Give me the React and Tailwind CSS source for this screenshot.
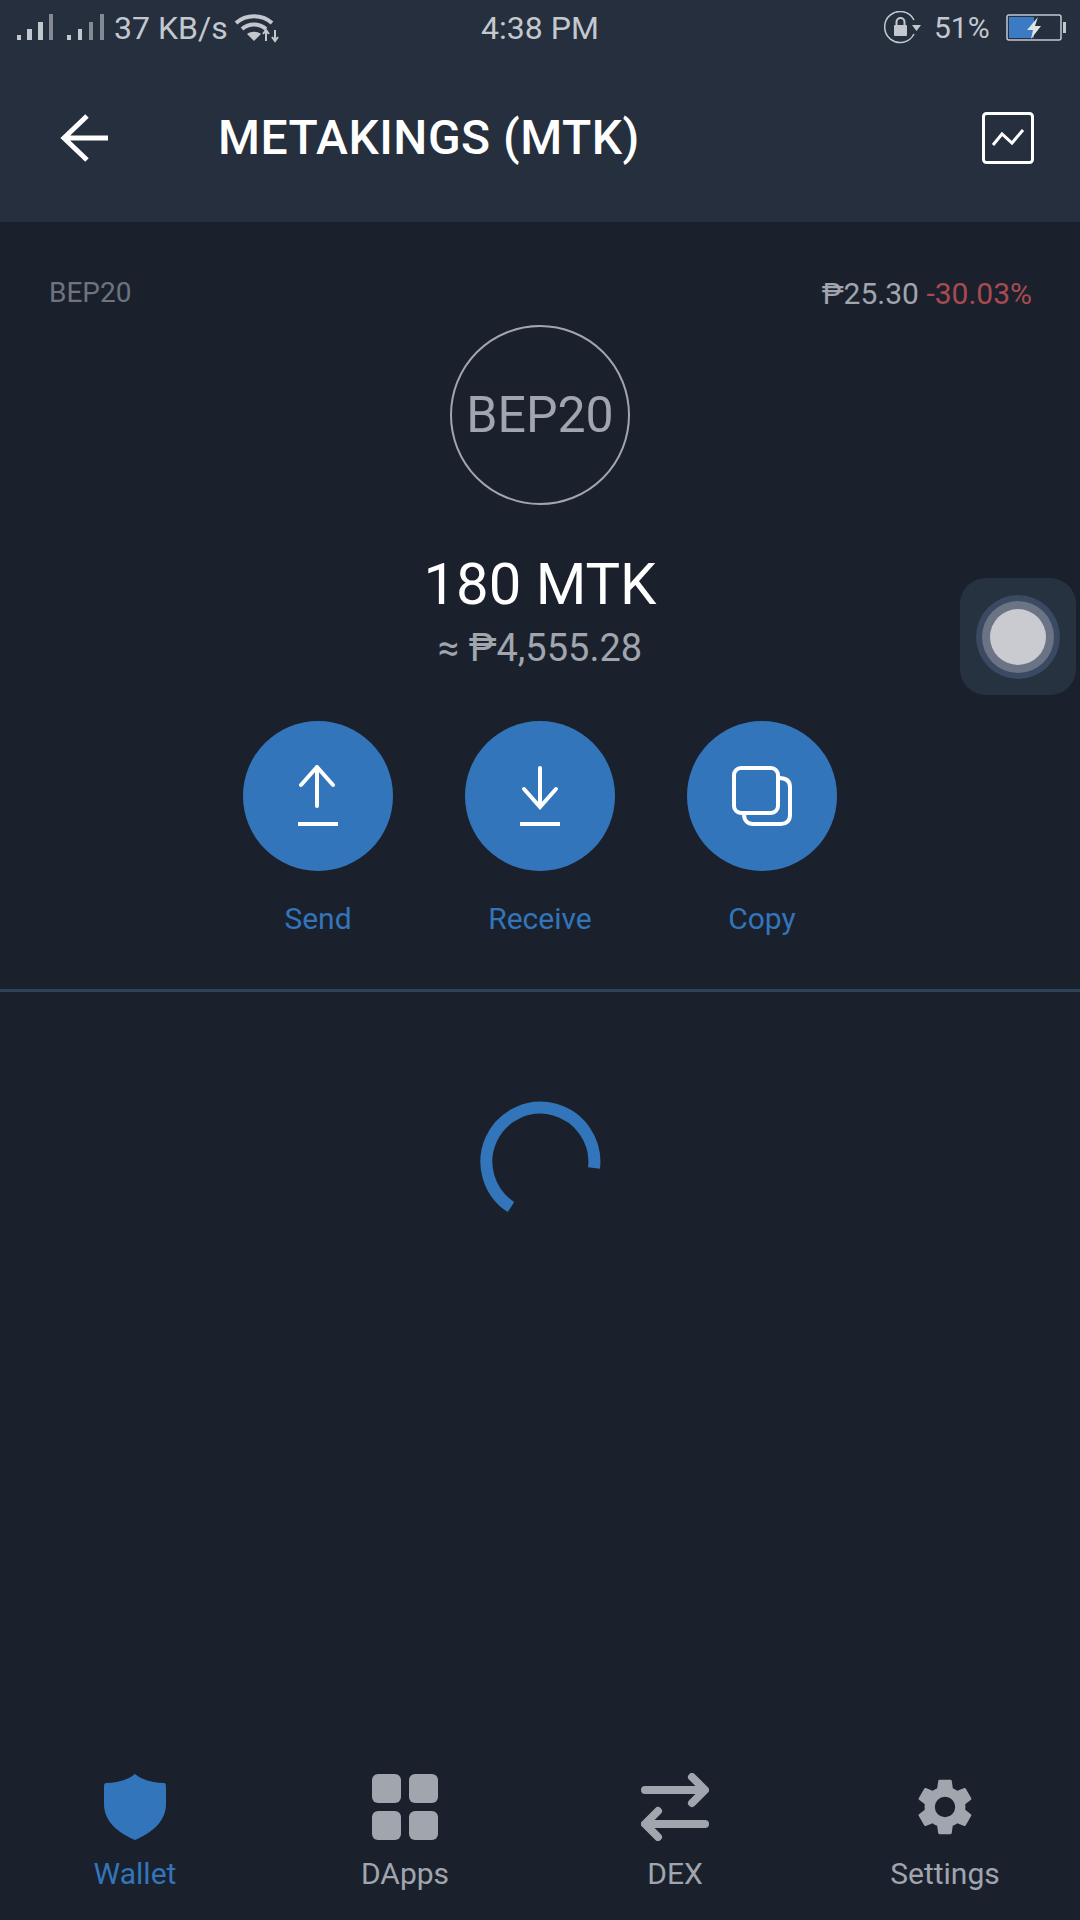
import React from "react";

const StatusBar = () => (
  <div className="flex items-center h-[56px] pl-[16px] pr-[14px] text-[#c3c8cf] text-[32px] leading-none relative">
    <svg width="90" height="30" viewBox="0 0 90 30" className="mr-[8px]">
      <g fill="#c3c8cf">
        <rect x="1" y="22" width="4" height="5" />
        <rect x="11" y="16" width="5" height="11" />
        <rect x="22" y="9" width="5" height="18" />
        <rect x="33" y="1" width="4" height="26" opacity="0.6" />
        <rect x="51" y="22" width="4" height="5" />
        <rect x="62" y="16" width="4" height="11" />
        <rect x="73" y="9" width="4" height="18" opacity="0.6" />
        <rect x="84" y="1" width="4" height="26" opacity="0.6" />
      </g>
    </svg>
    <span>37 KB/s</span>
    <svg width="46" height="30" viewBox="0 0 46 30" className="ml-[6px]" fill="none" stroke="#c3c8cf">
      <path d="M2 10 C12 1 28 1 38 10" strokeWidth="4" />
      <path d="M8 16 C15 10 25 10 32 16" strokeWidth="4" />
      <path d="M20 28 L13 21 C17 18 23 18 27 21 Z" fill="#c3c8cf" stroke="none" />
      <path d="M32 28 V18 M29 21 L32 17 L35 21 M41 17 V27 M38 24 L41 28 L44 24" strokeWidth="2" />
    </svg>
    <span className="absolute left-0 right-0 text-center pointer-events-none">4:38 PM</span>
    <div className="ml-auto flex items-center">
      <svg width="38" height="34" viewBox="0 0 38 34" fill="none" className="mr-[12px]">
        <path d="M30 23 A15.5 15.5 0 1 1 30 9" stroke="#c3c8cf" strokeWidth="1.5" />
        <path d="M28 14 H37 L32.5 20 Z" fill="#c3c8cf" />
        <rect x="10" y="14" width="13" height="11" rx="1" fill="#c3c8cf" />
        <path d="M12.5 14 V11 A4 4 0 0 1 20.5 11 V14" stroke="#c3c8cf" strokeWidth="2" />
      </svg>
      <span className="w-[60px] text-[30px]">51%</span>
      <svg width="60" height="28" viewBox="0 0 60 28" fill="none" className="ml-[12px]">
        <rect x="1" y="1" width="54" height="25" rx="2" stroke="#c3c8cf" strokeWidth="1.5" />
        <rect x="3" y="3" width="25" height="21" fill="#3a7bc4" />
        <rect x="57" y="8" width="3" height="11" fill="#c3c8cf" />
        <path d="M32 3 L21 16 H27 L25 25 L35 12 H29 Z" fill="#dfe2e6" />
      </svg>
    </div>
  </div>
);

const ActionButton = ({ label, children }) => (
  <div className="flex flex-col items-center w-[150px]">
    <div className="w-[150px] h-[150px] rounded-full bg-[#3375bb] flex items-center justify-center">
      {children}
    </div>
    <span className="mt-[30px] text-[30px] leading-[36px] text-[#3375bb]">{label}</span>
  </div>
);

const NavItem = ({ label, active, children }) => (
  <div className="flex flex-col items-center">
    <div className="h-[68px] flex items-center justify-center">{children}</div>
    <span className={`mt-[15px] text-[30px] leading-[36px] ${active ? "text-[#3375bb]" : "text-[#a0a5ae]"}`}>
      {label}
    </span>
  </div>
);

export default function App() {
  return (
    <div
      className="relative w-[1080px] h-[1920px] overflow-hidden bg-[#1a212d] flex flex-col"
      style={{ fontFamily: "Roboto, 'Noto Sans', sans-serif" }}
    >
      <header className="bg-[#252f3d] h-[222px] shrink-0">
        <StatusBar />
        <div className="flex items-center h-[164px] pb-[0px] pl-[60px] pr-[46px]">
          <svg width="48" height="48" viewBox="0 0 48 48" fill="none" stroke="#fff" strokeWidth="5">
            <path d="M48 24 H3 M27 2 L4 24 L27 46" />
          </svg>
          <h1 className="ml-[110px] text-[48px] font-medium text-white leading-none tracking-[0.5px]">
            METAKINGS (MTK)
          </h1>
          <svg width="52" height="52" viewBox="0 0 52 52" fill="none" stroke="#fff" className="ml-auto">
            <rect x="1.5" y="1.5" width="49" height="49" rx="3" strokeWidth="3" />
            <path d="M11 33 L20 22 L30 31 L41 18" strokeWidth="3" />
          </svg>
        </div>
      </header>

      <section className="flex flex-col items-center">
        <div className="w-full flex justify-between items-center pl-[49px] pr-[48px] mt-[53px] h-[36px] text-[30px]">
          <span className="text-[#6d7480] text-[28px]">BEP20</span>
          <span className="text-[#a0a5ae]">
            ₱25.30 <span className="text-[#a84a4f]">-30.03%</span>
          </span>
        </div>
        <div className="mt-[14px] w-[180px] h-[180px] rounded-full border-2 border-[#a0a5ae] flex items-center justify-center text-[50px] text-[#a0a5ae]">
          BEP20
        </div>
        <div className="mt-[44px] text-[58px] leading-[70px] text-white">180 MTK</div>
        <div className="mt-[6px] text-[38px] leading-[46px] text-[#a0a5ae]">≈ ₱4,555.28</div>
        <div className="mt-[50px] flex gap-[72px]">
          <ActionButton label="Send">
            <svg width="44" height="62" viewBox="0 0 44 62" fill="none" stroke="#fff" strokeWidth="4" strokeLinecap="round">
              <path d="M21 41 V3 M5 20 L21 2 L37 20" />
              <path d="M2 59 H42" strokeLinecap="butt" />
            </svg>
          </ActionButton>
          <ActionButton label="Receive">
            <svg width="44" height="62" viewBox="0 0 44 62" fill="none" stroke="#fff" strokeWidth="4" strokeLinecap="round">
              <path d="M22 3 V41 M6 24 L22 42 L38 24" />
              <path d="M2 59 H42" strokeLinecap="butt" />
            </svg>
          </ActionButton>
          <ActionButton label="Copy">
            <svg width="60" height="60" viewBox="0 0 60 60" fill="none" stroke="#fff" strokeWidth="4">
              <rect x="2" y="2" width="44" height="45" rx="7" />
              <path d="M47 12 C54 12 58 15 58 21 V49 C58 55 54 58 49 58 H21 C16 58 12 55 12 48" />
            </svg>
          </ActionButton>
        </div>
        <div className="w-full h-[3px] bg-[#2f4257] mt-[52px]" />
        <svg width="124" height="124" viewBox="0 0 124 124" fill="none" className="mt-[107px]">
          <path d="M116 69 A54 54 0 1 0 33 108" stroke="#3375bb" strokeWidth="12" />
        </svg>
      </section>

      <nav className="mt-auto grid grid-cols-4 h-[154px] pt-[7px]">
        <NavItem label="Wallet" active>
          <svg width="62" height="66" viewBox="0 0 62 66" fill="#3375bb">
            <path d="M31 0 C38 6 50 9 60 9 C62 9 62 12 62 14 V30 C62 46 50 58 31 66 C12 58 0 46 0 30 V14 C0 12 0 9 2 9 C12 9 24 6 31 0 Z" />
          </svg>
        </NavItem>
        <NavItem label="DApps">
          <svg width="66" height="66" viewBox="0 0 66 66" fill="#a0a5ae">
            <rect x="0" y="0" width="29" height="29" rx="6" />
            <rect x="37" y="0" width="29" height="29" rx="6" />
            <rect x="0" y="37" width="29" height="29" rx="6" />
            <rect x="37" y="37" width="29" height="29" rx="6" />
          </svg>
        </NavItem>
        <NavItem label="DEX">
          <svg width="68" height="68" viewBox="0 0 68 68" fill="none" stroke="#a0a5ae" strokeWidth="8" strokeLinecap="round" strokeLinejoin="round">
            <path d="M4 17 H63 M51 4 L64 17 L51 30" />
            <path d="M64 51 H5 M17 38 L4 51 L17 64" />
          </svg>
        </NavItem>
        <NavItem label="Settings">
          <svg width="68" height="68" viewBox="0 0 24 24" fill="#a0a5ae">
            <path d="M19.14 12.94c.04-.3.06-.61.06-.94s-.02-.64-.07-.94l2.03-1.58a.49.49 0 0 0 .12-.61l-1.92-3.32a.49.49 0 0 0-.59-.22l-2.39.96a7 7 0 0 0-1.62-.94l-.36-2.54a.48.48 0 0 0-.48-.41h-3.84a.48.48 0 0 0-.47.41l-.36 2.54c-.59.24-1.13.57-1.62.94l-2.39-.96a.48.48 0 0 0-.59.22L2.73 8.87a.47.47 0 0 0 .12.61l2.03 1.58c-.05.3-.09.63-.09.94s.02.64.07.94l-2.03 1.58a.49.49 0 0 0-.12.61l1.92 3.32c.12.22.37.29.59.22l2.39-.96c.5.38 1.03.7 1.62.94l.36 2.54c.05.24.24.41.48.41h3.84c.24 0 .44-.17.47-.41l.36-2.54c.59-.24 1.13-.56 1.62-.94l2.39.96c.22.08.47 0 .59-.22l1.92-3.32a.47.47 0 0 0-.12-.61l-2-1.58ZM12 15.6A3.6 3.6 0 1 1 12 8.4a3.6 3.6 0 0 1 0 7.2Z" />
          </svg>
        </NavItem>
      </nav>

      {/* floating assistive button */}
      <div className="absolute left-[960px] top-[578px] w-[116px] h-[117px] rounded-[26px] bg-[#263240] flex items-center justify-center">
        <div className="w-[84px] h-[84px] rounded-full bg-[#3b4a62] flex items-center justify-center">
          <div className="w-[72px] h-[72px] rounded-full bg-[#6a7484] flex items-center justify-center">
            <div className="w-[56px] h-[56px] rounded-full bg-[#c9cbd0]" />
          </div>
        </div>
      </div>
    </div>
  );
}
